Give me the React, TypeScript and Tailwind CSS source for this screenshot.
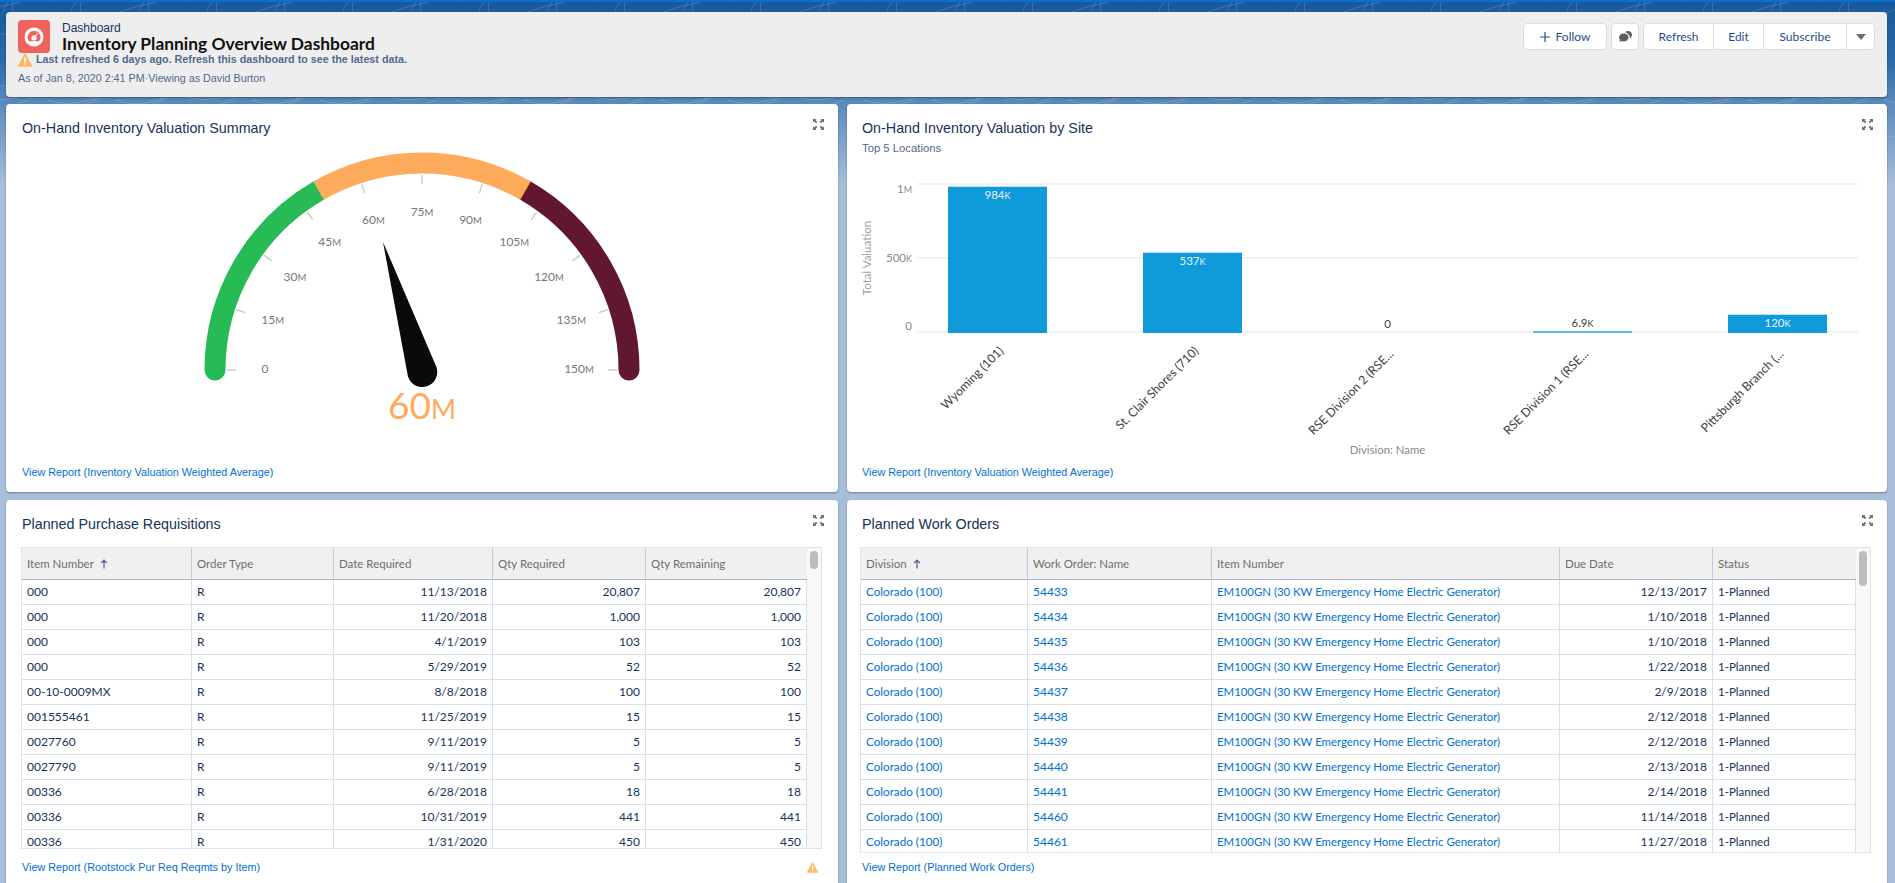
import { ReactNode } from "react";

const leftRows = [
    ["000", "R", "11/13/2018", "20,807", "20,807"],
    ["000", "R", "11/20/2018", "1,000", "1,000"],
    ["000", "R", "4/1/2019", "103", "103"],
    ["000", "R", "5/29/2019", "52", "52"],
    ["00-10-0009MX", "R", "8/8/2018", "100", "100"],
    ["001555461", "R", "11/25/2019", "15", "15"],
    ["0027760", "R", "9/11/2019", "5", "5"],
    ["0027790", "R", "9/11/2019", "5", "5"],
    ["00336", "R", "6/28/2018", "18", "18"],
    ["00336", "R", "10/31/2019", "441", "441"],
    ["00336", "R", "1/31/2020", "450", "450"],
];

const workOrders = [
    ["54433", "12/13/2017"],
    ["54434", "1/10/2018"],
    ["54435", "1/10/2018"],
    ["54436", "1/22/2018"],
    ["54437", "2/9/2018"],
    ["54438", "2/12/2018"],
    ["54439", "2/12/2018"],
    ["54440", "2/13/2018"],
    ["54441", "2/14/2018"],
    ["54460", "11/14/2018"],
    ["54461", "11/27/2018"],
];

const WarningIcon = ({ size = 14 }: { size?: number }) => (
    <svg width={size} height={size} viewBox="0 0 14 14" className="shrink-0">
        <path d="M7 .8 13.8 13.2H.2Z" fill="#ffb75d" stroke="#ffb75d" strokeLinejoin="round" />
        <rect x="6.2" y="4.6" width="1.6" height="4.8" fill="#fff" />
        <rect x="6.2" y="10.2" width="1.6" height="1.6" fill="#fff" />
    </svg>
);

const ExpandIcon = () => (
    <svg width="11" height="11" viewBox="0 0 11 11" fill="#706e6b" className="absolute right-[14px] top-[15px]">
        <path d="M0 0h3.600L2.500 1.100l1.800 1.800-1.300 1.300L1.200 2.400 0 3.600Z" />
        <path d="M11 0H7.400L8.500 1.100 6.700 2.900 8 4.200 9.800 2.400 11 3.600Z" />
        <path d="M0 11h3.600L2.500 9.900l1.800-1.800L3 6.800 1.200 8.600 0 7.400Z" />
        <path d="M11 11H7.400L8.500 9.900 6.700 8.100 8 6.800l1.800 1.800L11 7.400Z" />
    </svg>
);

const SortArrow = () => (
    <svg width="8" height="10" viewBox="0 0 8 10" className="ml-[6px] inline-block align-[-1px]" fill="none" stroke="#54698d" strokeWidth="1.300">
        <path d="M4 9.500V1.500M1.200 4 4 1.200 6.800 4" />
    </svg>
);

const Background = () => {
    const xs = Array.from({ length: 30 }, (_, i) => i * 68 - 20);
    return (
        <svg className="absolute left-0 top-0" width="1895" height="150" fill="none" stroke="#fff" strokeOpacity="0.16">
            {xs.map((x, i) => (
                <g key={x}>
                    <path d={`M${x} ${i % 2 ? 2 : 14}c12 -6 24 -8 40 -12`} />
                    <path d={`M${x + 22} 14c2 -4 2 -8 6 -12M${x + 34} 14c-2 -4 -2 -8 -1 -12`} />
                    <path d={`M${x} ${i % 3 ? 100 : 96}c18 6 30 4 48 -2`} />
                    <path d={`M${x + 30} 106c10 -2 18 -6 24 -10`} />
                </g>
            ))}
            <circle cx="1892" cy="170" r="34" />
            <circle cx="3" cy="60" r="26" />
        </svg>
    );
};

const Card = ({ title, titlePad, children }: { title: string; titlePad: string; children: ReactNode }) => (
    <section className="relative flex h-full flex-col rounded-[4px] bg-white shadow-[0_1px_2px_rgba(0,0,0,0.35)]">
        <ExpandIcon />
        <h2 className={`mt-4 font-['Liberation_Sans'] text-[14.300px] leading-4 text-[#16325c] ${titlePad}`}>{title}</h2>
        {children}
    </section>
);

const ReportLink = ({ label }: { label: string }) => (
    <a className="block font-['Liberation_Sans'] text-[10.800px] leading-4 text-[#0070d2]">{label}</a>
);

const polar = (value: number, radius: number) => {
    const a = (value / 150) * Math.PI;
    return [422 - radius * Math.cos(a), 370 - radius * Math.sin(a)];
};

const Gauge = () => {
    const scale = [0, 15, 30, 45, 60, 75, 90, 105, 120, 135, 150];
    return (
        <svg viewBox="182 140 480 300" width="480" height="300" className="mx-auto mt-1 block shrink-0 font-['Lato']">
            <path d="M215 370A207 207 0 0 1 318.500 190.700" fill="none" stroke="#27bb56" strokeWidth="21" strokeLinecap="round" />
            <path d="M525.500 190.700A207 207 0 0 1 629 370" fill="none" stroke="#621731" strokeWidth="21" strokeLinecap="round" />
            <path d="M318.500 190.700A207 207 0 0 1 525.500 190.700" fill="none" stroke="#ffab5c" strokeWidth="21" />
            {scale.map((v) => {
                const [x1, y1] = polar(v, 195);
                const [x2, y2] = polar(v, 186);
                const [tx, ty] = polar(v, 157);
                return (
                    <g key={v}>
                        <line x1={x1} y1={y1} x2={x2} y2={y2} stroke="#c4c4c4" strokeWidth="1.300" />
                        <text x={tx} y={ty + 3} textAnchor="middle" className="fill-[#777777] text-[12px]">
                            {v}
                            {v > 0 && <tspan className="text-[9.500px]">M</tspan>}
                        </text>
                    </g>
                );
            })}
            <path d="M383 242 436 366A15 15 0 1 1 407.300 373Z" fill="#0a0a0a" />
            <text x="422" y="419" textAnchor="middle" className="fill-[#ffab5c] text-[37px]">
                60<tspan className="text-[27px]">M</tspan>
            </text>
        </svg>
    );
};

const bars = [
    { name: "Wyoming (101)", cx: 997.5, top: 186.7, value: "984", unit: "K", labelY: 199, inside: true, endY: 345 },
    { name: "St. Clair Shores (710)", cx: 1192.5, top: 252.7, value: "537", unit: "K", labelY: 265, inside: true, endY: 345 },
    { name: "RSE Division 2 (RSE...", cx: 1387.5, top: 332, value: "0", unit: "", labelY: 328, inside: false, endY: 348 },
    { name: "RSE Division 1 (RSE...", cx: 1582.5, top: 331, value: "6.9", unit: "K", labelY: 327, inside: false, endY: 348 },
    { name: "Pittsburgh Branch (...", cx: 1777.5, top: 314.7, value: "120", unit: "K", labelY: 327, inside: true, endY: 348 },
];

const SiteChart = () => (
    <svg viewBox="847 156 1040 308" width="1040" height="308" className="block shrink-0 font-['Lato']">
        {[184, 257.7, 331.7].map((y) => (
            <line key={y} x1="917" x2="1858" y1={y} y2={y} stroke="#eeeeee" strokeWidth="1.500" />
        ))}
        <text x="912" y="193" textAnchor="end" className="fill-[#8a8a8a] text-[11.500px]">
            1<tspan className="text-[9px]">M</tspan>
        </text>
        <text x="912" y="262" textAnchor="end" className="fill-[#8a8a8a] text-[11.500px]">
            500<tspan className="text-[9px]">K</tspan>
        </text>
        <text x="912" y="330" textAnchor="end" className="fill-[#8a8a8a] text-[11.500px]">
            0
        </text>
        <text transform="translate(871 258) rotate(-90)" textAnchor="middle" className="fill-[#a0a0a0] text-[11.500px]">
            Total Valuation
        </text>
        {bars.map((b) => (
            <g key={b.name}>
                {b.top < 332 && (
                    <rect
                        x={b.cx - 49.5}
                        y={b.top}
                        width="99"
                        height={333 - b.top}
                        fill={b.inside ? "#0f9ad9" : "#5fbde8"}
                    />
                )}
                <text
                    x={b.cx}
                    y={b.labelY}
                    textAnchor="middle"
                    className={b.inside ? "fill-[#e8f6fd] text-[11.500px]" : "fill-[#3e3e3c] text-[11.500px]"}
                >
                    {b.value}
                    {b.unit && <tspan className="text-[9px]">{b.unit}</tspan>}
                </text>
                <text
                    transform={`translate(${b.cx} ${b.endY}) rotate(-45)`}
                    textAnchor="end"
                    dominantBaseline="hanging"
                    className="fill-[#3e3e3c] text-[12.200px]"
                >
                    {b.name}
                </text>
            </g>
        ))}
        <text x="1387.500" y="454" textAnchor="middle" className="fill-[#8a8a8a] text-[11.400px]">
            Division: Name
        </text>
    </svg>
);

type Column = { label: string; width: number; sorted?: boolean; align?: "right"; link?: boolean; size?: string };

const DataTable = ({
    columns,
    rows,
    height,
    thumb,
}: {
    columns: Column[];
    rows: string[][];
    height: string;
    thumb: string;
}) => (
    <div className={`flex overflow-hidden border border-[#dfe3ec] font-['Lato'] ${height}`}>
        <table className="shrink-0 table-fixed border-separate border-spacing-0 self-start">
            <colgroup>
                {columns.map((c) => (
                    <col key={c.label} style={{ width: c.width }} />
                ))}
            </colgroup>
            <thead>
                <tr>
                    {columns.map((c, i) => (
                        <th
                            key={c.label}
                            className={`h-[32px] border-b border-b-[#aab4c4] bg-[#f0f0f0] px-[5px] text-left text-[11.500px] font-normal text-[#706e6b] ${
                                i < columns.length - 1 ? "border-r border-r-[#bccadf]" : ""
                            }`}
                        >
                            {c.label}
                            {c.sorted && <SortArrow />}
                        </th>
                    ))}
                </tr>
            </thead>
            <tbody>
                {rows.map((row, r) => (
                    <tr key={r}>
                        {row.map((cell, i) => (
                            <td
                                key={i}
                                className={`h-[25px] truncate border-r border-b border-[#d9e0ec] px-[5px] ${columns[i].size ?? "text-[12px]"} ${
                                    columns[i].align === "right" ? "text-right" : "text-left"
                                } ${columns[i].link ? "text-[#0070d2]" : "text-[#16325c]"}`}
                            >
                                {cell}
                            </td>
                        ))}
                    </tr>
                ))}
            </tbody>
        </table>
        <div className="relative w-[14px] shrink-0 bg-[#f8f8f8]">
            <div className={`absolute left-[3px] top-[3px] w-2 rounded-full bg-[#bdbdbd] ${thumb}`} />
        </div>
    </div>
);

const leftColumns: Column[] = [
    { label: "Item Number", width: 170, sorted: true },
    { label: "Order Type", width: 142 },
    { label: "Date Required", width: 159, align: "right" },
    { label: "Qty Required", width: 153, align: "right" },
    { label: "Qty Remaining", width: 161, align: "right" },
];

const rightColumns: Column[] = [
    { label: "Division", width: 167, sorted: true, link: true, size: "text-[11.700px]" },
    { label: "Work Order: Name", width: 184, link: true },
    { label: "Item Number", width: 348, link: true, size: "text-[11.400px]" },
    { label: "Due Date", width: 153, align: "right" },
    { label: "Status", width: 143, size: "text-[11.500px]" },
];

const actionClass = "flex h-full items-center justify-center text-[12px] text-[#1f4d8c]";

const Header = () => (
    <header className="flex h-[85px] justify-between rounded-[4px] bg-[#eeeeee] pl-3 shadow-[0_1px_2px_rgba(0,0,0,0.35)]">
        <div className="pt-2">
            <div className="flex h-[33px] items-center gap-3">
                <div className="flex h-[33px] w-8 items-center justify-center rounded-[4px] bg-[#f0625c]">
                    <svg width="20" height="20" viewBox="0 0 20 20">
                        <circle cx="10" cy="10" r="9.500" fill="#fff" />
                        <path d="M4.900 14.200A6.500 6.500 0 1 1 15.100 14.200Z" fill="#f0625c" />
                        <circle cx="10" cy="11" r="2.600" fill="#fff" />
                        <path d="M14 5.200 9 10l2 2Z" fill="#fff" />
                    </svg>
                </div>
                <div className="flex flex-col">
                    <span className="font-['Liberation_Sans'] text-[12px] leading-[14px] text-[#16325c]">Dashboard</span>
                    <h1 className="font-['Lato'] text-[17.400px] font-bold leading-[17px] text-[#111111]">
                        Inventory Planning Overview Dashboard
                    </h1>
                </div>
            </div>
            <div className="flex h-[13px] items-center gap-1 font-['Liberation_Sans'] text-[10.750px] font-bold text-[#54698d]">
                <WarningIcon />
                Last refreshed 6 days ago. Refresh this dashboard to see the latest data.
            </div>
            <p className="mt-1 font-['Liberation_Sans'] text-[10.750px] leading-4 text-[#54698d]">
                As of Jan 8, 2020 2:41 PM·Viewing as David Burton
            </p>
        </div>
        <div className="mt-[11px] flex h-[27px] gap-1 pr-[12px] font-['Lato']">
            <button className={`${actionClass} w-[84px] gap-[6px] rounded-[4px] border border-[#d8dde6] bg-white`}>
                <svg width="10" height="10" viewBox="0 0 10 10" stroke="#1f4d8c" strokeWidth="1.200">
                    <path d="M5 0v10M0 5h10" />
                </svg>
                Follow
            </button>
            <button className={`${actionClass} w-[28px] rounded-[4px] border border-[#d8dde6] bg-white`}>
                <svg width="13" height="11" viewBox="0 0 13 11" fill="#5f5f5d">
                    <path d="M4.800 2.500C2.200 2.500 0 4.100 0 6.400c0 .9.400 1.800 1 2.400L.500 11l2.100-1c.7.3 1.400.4 2.200.4 2.600 0 4.700-1.800 4.700-4S7.400 2.500 4.800 2.500Z" />
                    <path d="M6.200 1.200C6.900.500 7.900 0 9 0c2.200 0 4 1.500 4 3.600 0 .8-.3 1.600-.8 2.100l.4 1.600-1.600-.7C10.500 3.900 8.700 1.900 6.200 1.200Z" />
                </svg>
            </button>
            <div className="flex h-full rounded-[4px] border border-[#d8dde6] bg-white">
                <button className={`${actionClass} w-[70px] border-r border-[#d8dde6]`}>Refresh</button>
                <button className={`${actionClass} w-[50px] border-r border-[#d8dde6]`}>Edit</button>
                <button className={`${actionClass} w-[83px] border-r border-[#d8dde6]`}>Subscribe</button>
                <button className={`${actionClass} w-[27px]`}>
                    <svg width="10" height="6" viewBox="0 0 10 6" fill="#706e6b">
                        <path d="M0 0h10L5 6Z" />
                    </svg>
                </button>
            </div>
        </div>
    </header>
);

export default function App() {
    return (
        <div className="relative h-[883px] overflow-hidden bg-[linear-gradient(180deg,#17589a_0px,#2a6aa8_60px,#5c8bbd_104px,#a8bedb_185px,#a8bedb_100%)]">
            <Background />
            <div className="relative h-[2px] bg-[#0a6fd0]" />
            <div className="relative pl-[6px] pr-[8px] pt-[10px]">
                <Header />
                <div className="mt-[7px] grid grid-cols-[832px_1040px] grid-rows-[388px_400px] gap-x-[9px] gap-y-2">
                    <Card title="On-Hand Inventory Valuation Summary" titlePad="pl-4">
                        <Gauge />
                        <div className="mt-auto pb-3 pl-4">
                            <ReportLink label="View Report (Inventory Valuation Weighted Average)" />
                        </div>
                    </Card>
                    <Card title="On-Hand Inventory Valuation by Site" titlePad="pl-[15px]">
                        <p className="mt-1 pl-[15px] font-['Liberation_Sans'] text-[11.300px] leading-4 text-[#54698d]">Top 5 Locations</p>
                        <SiteChart />
                        <div className="mt-auto pb-3 pl-[15px]">
                            <ReportLink label="View Report (Inventory Valuation Weighted Average)" />
                        </div>
                    </Card>
                    <Card title="Planned Purchase Requisitions" titlePad="pl-4">
                        <div className="ml-[15px] mr-[16px] mt-[15px]">
                            <DataTable columns={leftColumns} rows={leftRows} height="h-[302px]" thumb="h-[18px]" />
                        </div>
                        <div className="mt-[10px] flex items-center justify-between pl-4 pr-[20px]">
                            <ReportLink label="View Report (Rootstock Pur Req Reqmts by Item)" />
                            <WarningIcon size={11} />
                        </div>
                    </Card>
                    <Card title="Planned Work Orders" titlePad="pl-[15px]">
                        <div className="ml-[13px] mr-[16px] mt-[15px]">
                            <DataTable
                                columns={rightColumns}
                                rows={workOrders.map(([id, due]) => [
                                    "Colorado (100)",
                                    id,
                                    "EM100GN (30 KW Emergency Home Electric Generator)",
                                    due,
                                    "1-Planned",
                                ])}
                                height="h-[306px]"
                                thumb="h-[35px]"
                            />
                        </div>
                        <div className="mt-[6px] pl-[15px]">
                            <ReportLink label="View Report (Planned Work Orders)" />
                        </div>
                    </Card>
                </div>
            </div>
        </div>
    );
}
